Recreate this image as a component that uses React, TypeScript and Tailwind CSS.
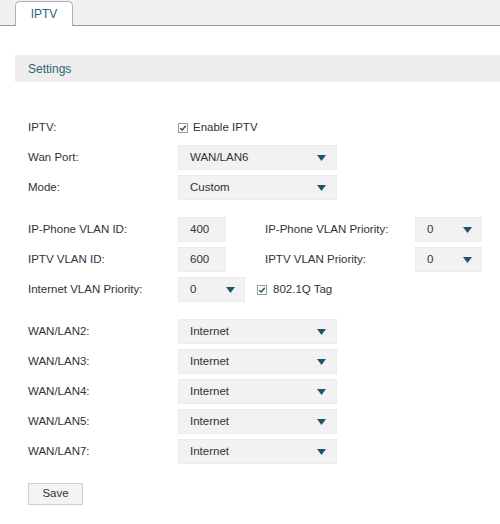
import React from "react";

const font = { fontFamily: '"Liberation Sans", Arial, sans-serif' };

function Caret() {
  return (
    <svg width="9" height="6" viewBox="0 0 9 6" className="shrink-0">
      <path d="M0 0 H9 L4.5 6 Z" fill="#1d5668" />
    </svg>
  );
}

function Select({ value, w, pr = "pr-[10px]" }: { value: string; w: string; pr?: string }) {
  return (
    <div className={`${w} h-[25px] bg-[#f2f2f2] border border-[#ebebeb] flex items-center justify-between pl-[11px] ${pr}`}>
      <span>{value}</span>
      <Caret />
    </div>
  );
}

function Check() {
  return (
    <span className="w-[10px] h-[10px] border border-[#9a9a9a] bg-white flex items-center justify-center shrink-0">
      <svg width="8" height="8" viewBox="0 0 8 8">
        <path d="M1.2 4.2 L3.2 6 L6.8 1.8" stroke="#1d5668" strokeWidth="1.5" fill="none" />
      </svg>
    </span>
  );
}

function Row({ label, children, className = "" }: { label: string; children: React.ReactNode; className?: string }) {
  return (
    <div className={`flex items-center h-[25px] ${className}`}>
      <div className="w-[150px] shrink-0">{label}</div>
      {children}
    </div>
  );
}

export default function App() {
  return (
    <div className="w-[500px] h-[524px] bg-white text-[#333] text-[11.5px] overflow-hidden" style={font}>
      <div className="h-[26px] bg-[#f0f0f0] border-b border-[#8e9a9e] flex items-end">
        <div className="ml-[15px] mb-[-1px] w-[58px] h-[25px] bg-white border border-[#a9b1b4] border-b-0 rounded-t-[5px] flex items-center justify-center text-[#2b6678] text-[12px]">
          IPTV
        </div>
      </div>
      <div className="mt-[29px] ml-[15px] h-[27px] bg-[#eeeeee] pl-[13px] flex items-center text-[#2b6678] text-[12px]">
        Settings
      </div>
      <div className="pl-[28px] flex flex-col gap-[5px] mt-[33px]">
        <Row label="IPTV:">
          <div className="flex items-center gap-[5px]">
            <Check />
            <span>Enable IPTV</span>
          </div>
        </Row>
        <Row label="Wan Port:">
          <Select value="WAN/LAN6" w="w-[159px]" />
        </Row>
        <Row label="Mode:">
          <Select value="Custom" w="w-[159px]" />
        </Row>
        <Row label="IP-Phone VLAN ID:" className="mt-[12px]">
          <div className="w-[48px] h-[25px] bg-[#f2f2f2] border border-[#ebebeb] flex items-center pl-[11px]">400</div>
          <div className="w-[150px] ml-[39px]">IP-Phone VLAN Priority:</div>
          <Select value="0" w="w-[67px]" pr="pr-[9px]" />
        </Row>
        <Row label="IPTV VLAN ID:">
          <div className="w-[48px] h-[25px] bg-[#f2f2f2] border border-[#ebebeb] flex items-center pl-[11px]">600</div>
          <div className="w-[150px] ml-[39px]">IPTV VLAN Priority:</div>
          <Select value="0" w="w-[67px]" pr="pr-[9px]" />
        </Row>
        <Row label="Internet VLAN Priority:">
          <Select value="0" w="w-[67px]" pr="pr-[9px]" />
          <div className="flex items-center gap-[6px] ml-[12px]">
            <Check />
            <span>802.1Q Tag</span>
          </div>
        </Row>
        {["WAN/LAN2:", "WAN/LAN3:", "WAN/LAN4:", "WAN/LAN5:", "WAN/LAN7:"].map((l, i) => (
          <Row key={l} label={l} className={i === 0 ? "mt-[12px]" : ""}>
            <Select value="Internet" w="w-[159px]" />
          </Row>
        ))}
        <div className="mt-[14px]">
          <button className="w-[55px] h-[22px] bg-[#f3f3f3] border border-[#cfcfcf] text-[#333] text-[11.5px]" style={font}>
            Save
          </button>
        </div>
      </div>
    </div>
  );
}
